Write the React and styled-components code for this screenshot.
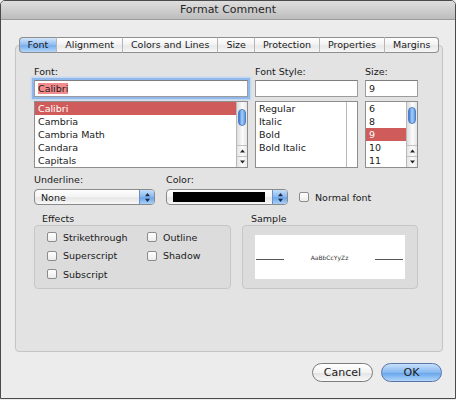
import React from "react";
import styled, { createGlobalStyle } from "styled-components";

const GlobalStyle = createGlobalStyle`
  html, body {
    margin: 0;
    padding: 0;
    background: #ececec;
  }
  body {
    font-family: "DejaVu Sans", Verdana, sans-serif;
    color: #1a1a1a;
  }
  * {
    box-sizing: border-box;
  }
`;

// Window chrome

const Window = styled.div`
  width: 456px;
  height: 399px;
  border: 1px solid #4a4a4a;
  border-radius: 5px 5px 0 0;
  background: #ececec;
  overflow: hidden;
`;

const TitleBar = styled.div`
  height: 19px;
  line-height: 18px;
  text-align: center;
  font-size: 11px;
  color: #262626;
  background: linear-gradient(#dedede, #bdbdbd);
  border-bottom: 1px solid #9c9c9c;
`;

const Body = styled.div`
  padding: 17px 12px 0 14px;
`;

// Tabs

const TabBar = styled.div`
  display: flex;
  justify-content: center;
  position: relative;
  z-index: 1;
  height: 16px;
`;

const Tab = styled.div`
  height: 16px;
  line-height: 14px;
  padding: 0 8px;
  font-size: 9.5px;
  color: #1a1a1a;
  border-top: 1px solid #8e8e8e;
  border-bottom: 1px solid #8e8e8e;
  border-left: 1px solid ${(p) => (p.$first ? "#8e8e8e" : "#b6b6b6")};
  border-right: ${(p) => (p.$last ? "1px solid #8e8e8e" : "none")};
  border-radius: ${(p) =>
    p.$first ? "4px 0 0 4px" : p.$last ? "0 4px 4px 0" : "0"};
  background: ${(p) =>
    p.$active
      ? "linear-gradient(#d2e6fc, #8dbcf1 50%, #77adec 55%, #b4d6f8)"
      : "linear-gradient(#ffffff, #f1f1f1 50%, #e8e8e8 55%, #f6f6f6)"};
  white-space: nowrap;
`;

const Panel = styled.div`
  margin-top: -8px;
  height: 307px;
  border: 1px solid #c4c4c4;
  border-radius: 4px;
  background: #e3e3e3;
  padding: 20px 0 0 18px;
`;

// Form parts

const Row = styled.div`
  display: flex;
  gap: ${(p) => p.$gap || 7}px;
  align-items: flex-end;
  margin-top: ${(p) => p.$top || 0}px;
`;

const Column = styled.div`
  width: ${(p) => p.$width}px;
  display: flex;
  flex-direction: column;
`;

const Label = styled.div`
  font-size: 9.5px;
  line-height: 12px;
  height: 12px;
  margin-bottom: ${(p) => (p.$gap === undefined ? 2 : p.$gap)}px;
  padding-left: ${(p) => p.$indent || 0}px;
  color: #1a1a1a;
`;

const TextInput = styled.div`
  height: 17px;
  line-height: 15px;
  padding: 0 3px;
  font-size: 9.5px;
  background: #fff;
  border: 1px solid #9c9c9c;
  border-top-color: #7e7e7e;
  box-shadow: ${(p) =>
    p.$focused ? "0 0 0 2px #8fb8ec, 0 0 2px 3px #bcd5f4" : "none"};
`;

const Selection = styled.span`
  background: #f28b8b;
`;

const ListBox = styled.div`
  margin-top: 4px;
  height: 67px;
  display: flex;
  background: #fff;
  border: 1px solid #8e8e8e;
`;

const Items = styled.div`
  flex: 1;
  overflow: hidden;
`;

const Item = styled.div`
  height: 13px;
  line-height: 13px;
  padding-left: 3px;
  font-size: 9.5px;
  color: ${(p) => (p.$selected ? "#fff" : "#1a1a1a")};
  background: ${(p) => (p.$selected ? "#cf5b5b" : "transparent")};
`;

const ScrollBar = styled.div`
  width: 11px;
  display: flex;
  flex-direction: column;
  border-left: 1px solid #b9b9b9;
`;

const Track = styled.div`
  flex: 1;
  display: flex;
  justify-content: center;
  background: ${(p) =>
    p.$plain ? "#fff" : "linear-gradient(90deg, #dcdcdc, #fbfbfb 55%, #e6e6e6)"};
`;

const Thumb = styled.div`
  margin-top: ${(p) => p.$offset}px;
  width: 8px;
  height: 17px;
  border-radius: 4px;
  border: 1px solid #4f7fc4;
  background: linear-gradient(90deg, #3b78d4, #a8d0f8 50%, #5d98e2);
`;

const ArrowCell = styled.div`
  height: 11px;
  display: flex;
  align-items: center;
  justify-content: center;
  border-top: 1px solid #c2c2c2;
  background: linear-gradient(90deg, #e4e4e4, #fbfbfb 55%, #e8e8e8);
`;

const Select = styled.div`
  width: ${(p) => p.$width}px;
  height: 16px;
  display: flex;
  border: 1px solid #8a8a8a;
  border-radius: 4px;
  background: linear-gradient(#ffffff, #f3f3f3 50%, #e6e6e6 55%, #f7f7f7);
  overflow: hidden;
`;

const SelectValue = styled.div`
  flex: 1;
  display: flex;
  align-items: center;
  padding: 0 7px 0 6px;
  font-size: 9.5px;
  color: #1a1a1a;
`;

const Swatch = styled.div`
  width: 100%;
  height: 10px;
  background: #000;
`;

const Stepper = styled.div`
  width: 15px;
  display: flex;
  align-items: center;
  justify-content: center;
  border-left: 1px solid #6c8fc3;
  background: linear-gradient(#c3def9, #86b7ef 50%, #6aa5ea 55%, #a9d1f7);
`;

const CheckRow = styled.div`
  display: flex;
  align-items: center;
  gap: 6px;
  height: ${(p) => p.$height || 16}px;
  font-size: 9.5px;
  color: #1a1a1a;
`;

const Box = styled.div`
  width: 10px;
  height: 10px;
  border: 1px solid #8c8c8c;
  border-radius: 2px;
  background: linear-gradient(#ffffff, #ececec);
  flex-shrink: 0;
`;

const GroupBox = styled.div`
  width: ${(p) => p.$width}px;
  height: 64px;
  border: 1px solid #c6c6c6;
  border-radius: 4px;
  background: #dcdcdc;
`;

const EffectsGrid = styled.div`
  display: grid;
  grid-template-columns: 100px auto;
  grid-auto-rows: 18.5px;
  padding: 2px 0 0 12px;
`;

const SampleBox = styled(GroupBox)`
  padding: 9px 0 0 12px;
`;

const SampleArea = styled.div`
  width: 150px;
  height: 44px;
  background: #fff;
  display: flex;
  align-items: center;
  justify-content: space-between;
  padding: 0 2px 0 1px;
`;

const SampleLine = styled.div`
  width: 28px;
  height: 1px;
  margin-top: 5px;
  background: #555;
`;

const SampleText = styled.span`
  font-size: 6px;
  color: #333;
`;

const Footer = styled.div`
  display: flex;
  justify-content: flex-end;
  gap: 8px;
  margin-top: 11px;
  padding-right: 1px;
`;

const Button = styled.div`
  width: 61px;
  height: 19px;
  line-height: 17px;
  text-align: center;
  font-size: 11px;
  color: #1a1a1a;
  border-radius: 10px;
  border: 1px solid ${(p) => (p.$primary ? "#5a76a6" : "#7c7c7c")};
  background: ${(p) =>
    p.$primary
      ? "linear-gradient(#c6e0fb, #86b8f0 50%, #6ba7ec 55%, #b0d6fa)"
      : "linear-gradient(#ffffff, #f3f3f3 50%, #e4e4e4 55%, #f8f8f8)"};
`;

// Icons

const UpDown = () => (
  <svg width="5" height="9" viewBox="0 0 5 9">
    <path d="M2.5 0 L5 3.2 H0 Z M0 5.8 H5 L2.5 9 Z" fill="#1d2b45" />
  </svg>
);

const Arrow = ({ down }) => (
  <svg width="5" height="4" viewBox="0 0 5 4">
    <path d={down ? "M0 0.5 H5 L2.5 3.5 Z" : "M2.5 0.5 L5 3.5 H0 Z"} fill="#222" />
  </svg>
);

const Scroller = ({ plain, thumbOffset }) => (
  <ScrollBar>
    <Track $plain={plain}>{!plain && <Thumb $offset={thumbOffset} />}</Track>
    {!plain && (
      <>
        <ArrowCell>
          <Arrow />
        </ArrowCell>
        <ArrowCell>
          <Arrow down />
        </ArrowCell>
      </>
    )}
  </ScrollBar>
);

const Check = ({ label, height }) => (
  <CheckRow $height={height}>
    <Box />
    {label}
  </CheckRow>
);

const ListField = ({ label, width, value, focused, items, selected, plain, thumbOffset }) => (
  <Column $width={width}>
    <Label>{label}</Label>
    <TextInput $focused={focused}>
      {focused ? <Selection>{value}</Selection> : value}
    </TextInput>
    <ListBox>
      <Items>
        {items.map((item) => (
          <Item key={item} $selected={item === selected}>
            {item}
          </Item>
        ))}
      </Items>
      <Scroller plain={plain} thumbOffset={thumbOffset} />
    </ListBox>
  </Column>
);

const tabs = [
  "Font",
  "Alignment",
  "Colors and Lines",
  "Size",
  "Protection",
  "Properties",
  "Margins",
];

const App = () => (
  <>
    <GlobalStyle />
    <Window>
      <TitleBar>Format Comment</TitleBar>
      <Body>
        <TabBar>
          {tabs.map((t, i) => (
            <Tab
              key={t}
              $active={i === 0}
              $first={i === 0}
              $last={i === tabs.length - 1}
            >
              {t}
            </Tab>
          ))}
        </TabBar>
        <Panel>
          <Row>
            <ListField
              label="Font:"
              width={214}
              value="Calibri"
              focused
              items={["Calibri", "Cambria", "Cambria Math", "Candara", "Capitals"]}
              selected="Calibri"
              thumbOffset={7}
            />
            <ListField
              label="Font Style:"
              width={103}
              value=""
              items={["Regular", "Italic", "Bold", "Bold Italic"]}
              plain
            />
            <ListField
              label="Size:"
              width={53}
              value="9"
              items={["6", "8", "9", "10", "11"]}
              selected="9"
              thumbOffset={5}
            />
          </Row>

          <Row $gap={11} $top={6}>
            <Column $width={121}>
              <Label $gap={3}>Underline:</Label>
              <Select $width={121}>
                <SelectValue>None</SelectValue>
                <Stepper>
                  <UpDown />
                </Stepper>
              </Select>
            </Column>
            <Column $width={122}>
              <Label $gap={3}>Color:</Label>
              <Select $width={122}>
                <SelectValue>
                  <Swatch />
                </SelectValue>
                <Stepper>
                  <UpDown />
                </Stepper>
              </Select>
            </Column>
            <Check label="Normal font" height={16} />
          </Row>

          <Row $gap={11} $top={8}>
            <Column $width={197}>
              <Label $gap={0} $indent={8}>
                Effects
              </Label>
              <GroupBox $width={197}>
                <EffectsGrid>
                  <Check label="Strikethrough" height={18.5} />
                  <Check label="Outline" height={18.5} />
                  <Check label="Superscript" height={18.5} />
                  <Check label="Shadow" height={18.5} />
                  <Check label="Subscript" height={18.5} />
                </EffectsGrid>
              </GroupBox>
            </Column>
            <Column $width={176}>
              <Label $gap={0} $indent={9}>
                Sample
              </Label>
              <SampleBox $width={176}>
                <SampleArea>
                  <SampleLine />
                  <SampleText>AaBbCcYyZz</SampleText>
                  <SampleLine />
                </SampleArea>
              </SampleBox>
            </Column>
          </Row>
        </Panel>
        <Footer>
          <Button>Cancel</Button>
          <Button $primary>OK</Button>
        </Footer>
      </Body>
    </Window>
  </>
);

export default App;
